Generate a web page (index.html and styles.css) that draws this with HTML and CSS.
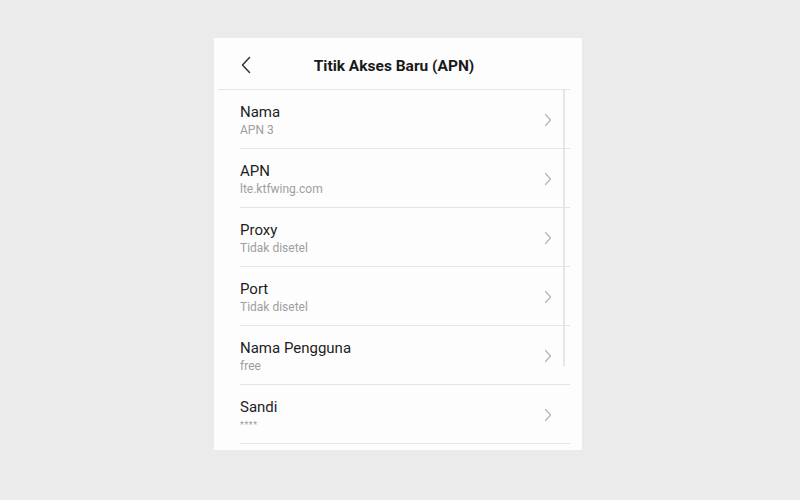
FILE: index.html
```
<!DOCTYPE html>
<html lang="id">
<head>
  <meta charset="UTF-8" />
  <meta name="viewport" content="width=device-width, initial-scale=1.0"/>
  <title>Titik Akses Baru (APN)</title>
  <link rel="stylesheet" href="styles.css">
</head>
<body>

  <div class="card">
    <div class="header">
      <svg class="back" width="12" height="18" viewBox="0 0 12 18">
        <path d="M9.5 1.5 L2.5 9 L9.5 16.5" fill="none" stroke="#333" stroke-width="1.5" stroke-linecap="round" stroke-linejoin="round"/>
      </svg>
      <h1>Titik Akses Baru (APN)</h1>
    </div>

    <div class="list">
      <div class="row">
        <div class="text">
          <div class="label">Nama</div>
          <div class="value">APN 3</div>
        </div>
        <svg class="arrow" width="8" height="14" viewBox="0 0 8 14"><path d="M1.5 1.5 L6.5 7 L1.5 12.5" /></svg>
      </div>
      <div class="row">
        <div class="text">
          <div class="label">APN</div>
          <div class="value">lte.ktfwing.com</div>
        </div>
        <svg class="arrow" width="8" height="14" viewBox="0 0 8 14"><path d="M1.5 1.5 L6.5 7 L1.5 12.5" /></svg>
      </div>
      <div class="row">
        <div class="text">
          <div class="label">Proxy</div>
          <div class="value">Tidak disetel</div>
        </div>
        <svg class="arrow" width="8" height="14" viewBox="0 0 8 14"><path d="M1.5 1.5 L6.5 7 L1.5 12.5" /></svg>
      </div>
      <div class="row">
        <div class="text">
          <div class="label">Port</div>
          <div class="value">Tidak disetel</div>
        </div>
        <svg class="arrow" width="8" height="14" viewBox="0 0 8 14"><path d="M1.5 1.5 L6.5 7 L1.5 12.5" /></svg>
      </div>
      <div class="row">
        <div class="text">
          <div class="label">Nama Pengguna</div>
          <div class="value">free</div>
        </div>
        <svg class="arrow" width="8" height="14" viewBox="0 0 8 14"><path d="M1.5 1.5 L6.5 7 L1.5 12.5" /></svg>
      </div>
      <div class="row">
        <div class="text">
          <div class="label">Sandi</div>
          <div class="value stars">****</div>
        </div>
        <svg class="arrow" width="8" height="14" viewBox="0 0 8 14"><path d="M1.5 1.5 L6.5 7 L1.5 12.5" /></svg>
      </div>

      <div class="scrollbar"></div>
    </div>
  </div>

</body>
</html>
```

FILE: styles.css
```
body {
  font-family: Roboto, "Liberation Sans", Arial, sans-serif;
  background: #ebebeb;
  margin: 0;
  padding: 38px 0 0 214px;
}
.card {
  width: 352px;
  height: 412px;
  background: #fdfdfd;
  padding: 0 12px 0 4px;
}
.header {
  height: 51px;
  display: flex;
  align-items: center;
  border-bottom: 1px solid #e4e4e4;
}
.back {
  margin-left: 22px;
  margin-top: 2px;
}
.header h1 {
  flex: 1;
  margin: 0 0 0 -34px;
  padding-top: 4px;
  font-size: 15.5px;
  font-weight: bold;
  color: #1a1a1a;
  text-align: center;
}
.list {
  position: relative;
}
.row {
  height: 58px;
  margin-left: 22px;
  display: flex;
  align-items: center;
  border-bottom: 1px solid #e4e4e4;
}
.text {
  flex: 1;
  padding-top: 2px;
}
.label {
  font-size: 15px;
  line-height: 19px;
  color: #1e1e1e;
}
.value {
  font-size: 12px;
  line-height: 16px;
  margin-top: 0;
  color: #9e9e9e;
}
.stars {
  font-size: 9px;
  letter-spacing: 0.5px;
}
.arrow {
  margin-right: 18px;
  margin-top: 2px;
  fill: none;
  stroke: #b5b5b5;
  stroke-width: 1.2;
  stroke-linecap: round;
  stroke-linejoin: round;
}
.scrollbar {
  position: absolute;
  top: 0;
  right: 5px;
  width: 2px;
  height: 276px;
  background: #e6e6e6;
}
```
